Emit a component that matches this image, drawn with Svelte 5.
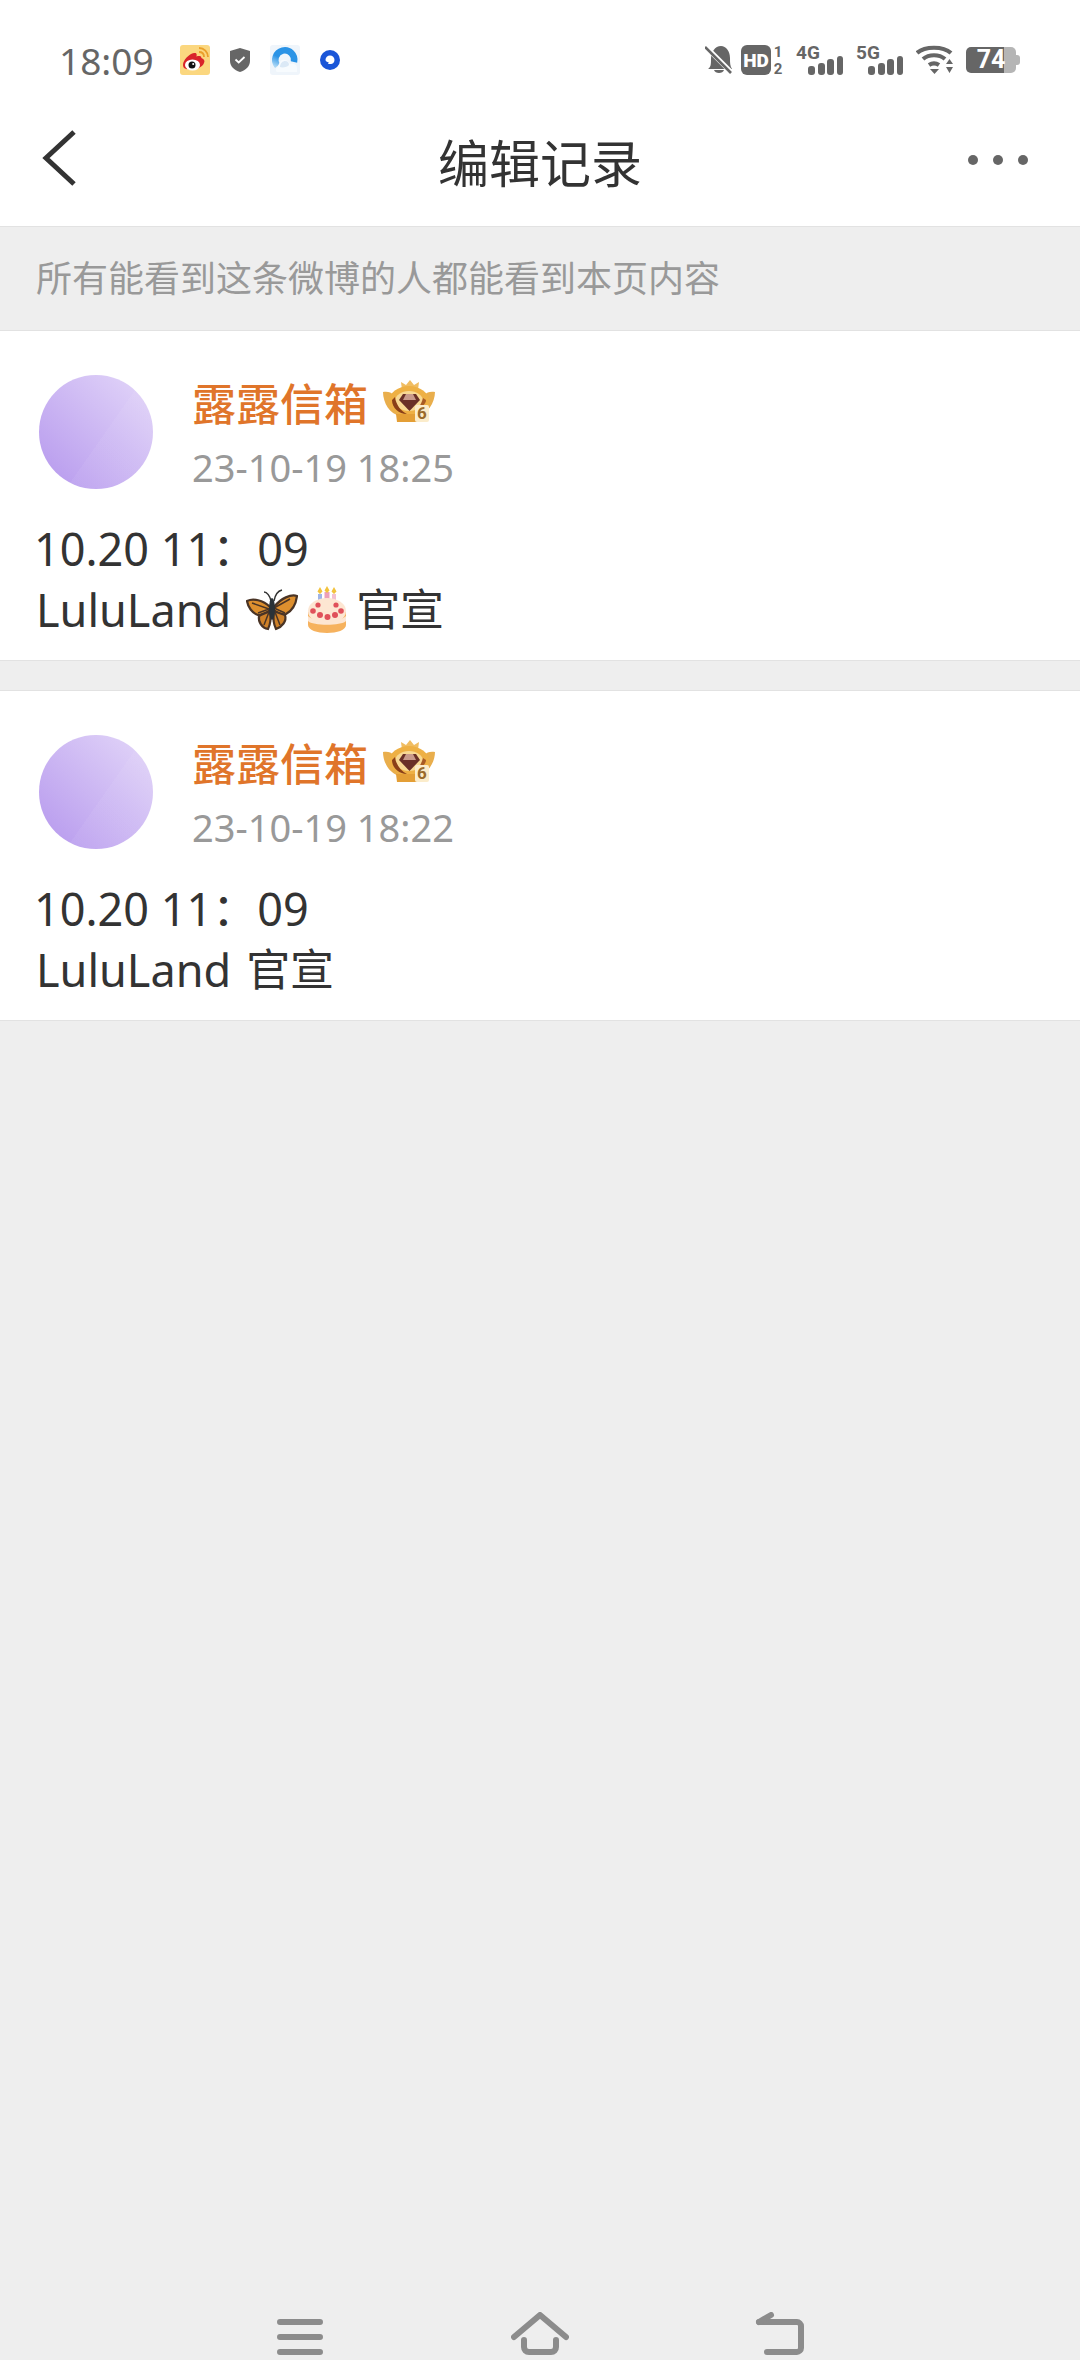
<script lang="ts">
  const records = [
    { time: '23-10-19 18:25', emoji: true },
    { time: '23-10-19 18:22', emoji: false }
  ];
</script>

<div class="page">
  <header class="status">
    <span class="clock">18:09</span>
    <div class="apps">
      <svg class="app" width="30" height="30" viewBox="0 0 30 30">
        <rect width="30" height="30" rx="3" fill="#fbd77f" />
        <path d="M3 20c0-5 6-11 11-12 3-.5 3 2 2.400 3.500 3-1 5-.5 5 1.500 3 1 3.600 3 2.600 5-1.500 4-7 6.500-12 6.500S3 24 3 20z" fill="#d9232a" />
        <ellipse cx="12.500" cy="20" rx="7.500" ry="5.500" fill="#fff" />
        <circle cx="12" cy="20" r="3.500" fill="#111" />
        <circle cx="13.200" cy="19" r="1" fill="#fff" />
        <path d="M19 7c3 0 5 2 5 5M19 3c5 0 9 4 9 9" fill="none" stroke="#eaa02a" stroke-width="1.800" />
      </svg>
      <svg class="app shield" width="20" height="24" viewBox="0 0 20 24">
        <path d="M10 0l10 3v10c0 5-4 9-10 11C4 22 0 18 0 13V3z" fill="#666" />
        <path d="M5.500 11.500l3.200 3 5.800-5.500" fill="none" stroke="#fff" stroke-width="1.800" />
      </svg>
      <svg class="app cloud" width="30" height="30" viewBox="0 0 30 30">
        <defs>
          <linearGradient id="arc" x1="0" y1="1" x2="0.600" y2="0">
            <stop offset="0" stop-color="#a9d6f5" />
            <stop offset="0.500" stop-color="#2a93e6" />
          </linearGradient>
        </defs>
        <rect width="30" height="30" rx="3" fill="#eff5fb" />
        <path d="M7.500 21A9.500 9.500 0 1 1 24 17" fill="none" stroke="url(#arc)" stroke-width="6.500" />
        <path d="M7 27c-2-1-1-5 1-5 1-4 3-8 7-7 3 0 4 3 5 4 4-1 7 1 7 4v4z" fill="#f7fbfe" />
        <path d="M10 22c0-4 3-6 5-6 3 0 4 2 4 4-1 2-7 3-9 2z" fill="#dbe9f6" />
      </svg>
      <svg class="app" width="20" height="20" viewBox="0 0 20 20">
        <circle cx="10" cy="10" r="10" fill="#1a56d8" />
        <path d="M10 5.500a4.500 4.500 0 0 1 4.500 4.500c0 2.500-2 4-3.500 4H8l.8-1.500C7 12 5.500 11 5.500 10A4.500 4.500 0 0 1 10 5.500z" fill="#fff" />
      </svg>
    </div>
    <div class="indicators">
      <svg class="bell" width="28" height="30" viewBox="0 0 28 30">
        <path d="M3 24c3-2 3-5 3-10C6 7 10 1 16 1c5 0 9 5 9 12 0 5 0 8 2 11z" fill="#666" />
        <path d="M9 25c1 4 9 4 10 0z" fill="#666" />
        <path d="M0 1l27 27" stroke="#fff" stroke-width="5" />
        <path d="M0 2l26 26" stroke="#666" stroke-width="2.600" />
      </svg>
      <svg class="hd" width="43" height="36" viewBox="0 0 43 36">
        <rect y="3" width="30" height="30" rx="6" fill="#666" />
        <text x="15" y="24.500" text-anchor="middle" class="hd-label">HD</text>
        <text x="37" y="15" text-anchor="middle" class="sim">1</text>
        <text x="37" y="32" text-anchor="middle" class="sim">2</text>
      </svg>
      <svg class="net" width="48" height="36" viewBox="0 0 48 36">
        <text x="0" y="17" class="gen">4G</text>
        <rect x="12" y="24" width="7" height="9" rx="3" fill="#666" />
        <rect x="22" y="21" width="7" height="12" rx="3" fill="#666" />
        <rect x="31" y="17" width="7" height="16" rx="3" fill="#666" />
        <rect x="41" y="14" width="6" height="19" rx="3" fill="#666" />
      </svg>
      <svg class="net" width="48" height="36" viewBox="0 0 48 36">
        <text x="0" y="17" class="gen">5G</text>
        <rect x="12" y="24" width="7" height="9" rx="3" fill="#666" />
        <rect x="22" y="21" width="7" height="12" rx="3" fill="#666" />
        <rect x="31" y="17" width="7" height="16" rx="3" fill="#666" />
        <rect x="41" y="14" width="6" height="19" rx="3" fill="#666" />
      </svg>
      <svg class="wifi" width="38" height="30" viewBox="0 0 38 30">
        <g fill="none" stroke="#666" stroke-width="4.200">
          <path d="M1 8c8-7 26-7 34 0" />
          <path d="M7 14c6-5 16-5 22 0" />
          <path d="M13 20c3-2 7-2 10 0" />
        </g>
        <path d="M14 24h9l-4.500 5z" fill="#666" />
        <path d="M30 19l3.500-5 3.500 5zM30 22h7l-3.500 6z" fill="#666" />
      </svg>
      <div class="battery">
        <span class="level">74</span>
        <span class="cap"></span>
      </div>
    </div>
  </header>

  <nav class="titlebar">
    <svg class="back" width="36" height="58" viewBox="0 0 36 58">
      <path d="M33 3L5 29l28 26" fill="none" stroke="#333" stroke-width="5" />
    </svg>
    <h1>编辑记录</h1>
    <div class="more"><i></i><i></i><i></i></div>
  </nav>

  <p class="notice">所有能看到这条微博的人都能看到本页内容</p>

  {#each records as record}
    <section class="card">
      <div class="author">
        <div class="avatar"></div>
        <div class="meta">
          <div class="name">
            露露信箱
            <svg class="crown" width="54" height="46" viewBox="0 0 54 46">
              <path d="M20 11l-1-8 5 3 4-5 4 5 5-3-1 8z" fill="#f0bd62" />
              <path d="M1 13c4-1 8 0 11 3l6 21C8 35 1 24 1 13zM53 13c-4-1-8 0-11 3l-6 21c9-2 17-13 17-24z" fill="#e9ae4c" />
              <ellipse cx="27" cy="22" rx="20" ry="15" fill="#eeb044" />
              <ellipse cx="27" cy="22" rx="14" ry="10" fill="#f8d893" />
              <path d="M13 18c1 8 6 14 12 17-8 0-15-6-15-14z" fill="#8a3f18" />
              <path d="M41 19c-1 4-3 8-6 11 5-2 9-5 9-9z" fill="#a85a24" />
              <path d="M21 15h13l4 6-10.500 11L17 21z" fill="#6a3028" />
              <path d="M24 15h7l3 6H21z" fill="#c99a8c" />
              <path d="M14 35h26l-1 8H15z" fill="#e49f36" />
              <rect x="33" y="26" width="14" height="17" rx="2" fill="#fbeccb" />
              <text x="40" y="40" text-anchor="middle" class="rank">6</text>
            </svg>
          </div>
          <time class="stamp">{record.time}</time>
        </div>
      </div>
      <div class="content">
        <div class="digits">10.20 11：09</div>
        <div class="line">
          <span class="label">LuluLand</span>
          {#if record.emoji}
            <svg class="butterfly" width="52" height="42" viewBox="0 0 52 42">
              <path d="M18 3c3 0 6 4 7 9M36 1c-4 1-7 5-8 11" fill="none" stroke="#333" stroke-width="1.500" />
              <path d="M24 18C17 11 7 9 1 12c1 6 5 12 11 14 4 0 9-2 12-5z" fill="#dd8f2e" stroke="#4a3426" stroke-width="2.200" />
              <path d="M28 18c7-9 17-13 23-11-1 8-5 15-11 18-4 1-9-1-12-4z" fill="#dd8f2e" stroke="#4a3426" stroke-width="2.200" />
              <path d="M24 22c-4 2-8 3-11 5-1 6 3 12 9 13 2-4 3-12 2-18z" fill="#cf8128" stroke="#4a3426" stroke-width="2.200" />
              <path d="M28 22c4 2 8 3 11 4 2 6-3 12-9 14-2-4-3-12-2-18z" fill="#cf8128" stroke="#4a3426" stroke-width="2.200" />
              <path d="M6 14l17 6M12 24l11-4M44 10l-16 9M39 24l-11-5M18 36l5-13M34 36l-5-13" stroke="#4a3426" stroke-width="1.500" />
              <ellipse cx="26" cy="20" rx="3" ry="11" fill="#2a3238" />
            </svg>
            <svg class="cake" width="40" height="48" viewBox="0 0 40 48">
              <rect x="11" y="8" width="4" height="14" fill="#9fb4e6" />
              <rect x="17.500" y="6" width="5" height="17" fill="#ee9fb8" />
              <rect x="25" y="8" width="4" height="14" fill="#f3c0d0" />
              <path d="M13 1l2.500 4.500L13 8l-2.500-2.500zM20 0l2.500 4.500L20 7l-2.500-2.500zM27 1l2.500 4.500L27 8l-2.500-2.500z" fill="#f2c23c" />
              <path d="M1 26v13c0 5 9 8 19 8s19-3 19-8V26z" fill="#f6b25e" />
              <ellipse cx="20" cy="25" rx="19" ry="13" fill="#fde6d2" />
              <path d="M1 30v5c5 5 33 5 38 0v-5c-5 6-33 6-38 0z" fill="#fde6d2" />
              <g fill="#e0505a">
                <circle cx="6" cy="25" r="2.800" /><circle cx="11" cy="19" r="2.600" /><circle cx="29" cy="19" r="2.600" /><circle cx="34" cy="25" r="2.800" />
                <circle cx="13" cy="29" r="3" /><circle cx="20.500" cy="31" r="3" /><circle cx="28" cy="29" r="3" />
              </g>
            </svg>
          {/if}
          <span class="cjk">官宣</span>
        </div>
      </div>
    </section>
  {/each}

  <footer class="softkeys">
    <svg width="46" height="36" viewBox="0 0 46 36">
      <path d="M3 3h40M3 18h40M3 33h40" stroke="#8c8c8c" stroke-width="6" stroke-linecap="round" />
    </svg>
    <svg width="58" height="43" viewBox="0 0 58 43">
      <path d="M3 25L29 3l26 22" fill="none" stroke="#8c8c8c" stroke-width="6" stroke-linecap="round" stroke-linejoin="round" />
      <path d="M13 28v7c0 3 2 5 5 5h22c3 0 5-2 5-5v-7" fill="none" stroke="#8c8c8c" stroke-width="6" stroke-linecap="round" />
    </svg>
    <svg width="50" height="43" viewBox="0 0 50 43">
      <path d="M4 10h38c2 0 4 2 4 4v22c0 2-2 4-4 4H12" fill="none" stroke="#8c8c8c" stroke-width="6" stroke-linecap="round" />
      <path d="M4 10l12-7" fill="none" stroke="#8c8c8c" stroke-width="6" stroke-linecap="round" />
    </svg>
  </footer>
</div>

<style>
  :global(body) { margin: 0; background: #eeeeee; }
  .page {
    display: flex;
    flex-direction: column;
    height: 2360px;
    overflow: hidden;
    background: #eeeeee;
    color: #333;
    font-family: "Noto Sans", "Noto Sans CJK SC", sans-serif;
  }
  .status {
    display: flex;
    align-items: center;
    height: 100px;
    padding: 20px 60px 0 59px;
    box-sizing: border-box;
    background: #fff;
    color: #666;
  }
  .clock { font-size: 37px; width: 121px; }
  .apps { display: flex; align-items: center; gap: 20px; }
  .indicators { display: flex; align-items: center; gap: 8px; margin-left: auto; }
  .hd-label { font: 900 19px Roboto, sans-serif; fill: #fff; }
  .sim { font: 700 15px Roboto, sans-serif; fill: #666; }
  .gen { font: 700 19px Roboto, sans-serif; fill: #666; }
  .net { margin-left: 4px; }
  .wifi { margin: 0 4px; }
  .battery { display: flex; align-items: center; width: 54px; height: 26px; }
  .level {
    width: 50px;
    height: 26px;
    border-radius: 5px;
    background: linear-gradient(90deg, #666 76%, #b5b5b5 76%);
    color: #fff;
    font: 700 25px/26px Roboto, sans-serif;
    text-align: center;
  }
  .cap { width: 4px; height: 10px; border-radius: 0 3px 3px 0; background: #b5b5b5; }
  .titlebar {
    display: grid;
    grid-template-columns: 1fr auto 1fr;
    align-items: center;
    height: 127px;
    padding: 0 41px 6px;
    box-sizing: border-box;
    background: #fff;
    border-bottom: 1px solid #e2e2e2;
  }
  .back { margin-bottom: 4px; }
  .titlebar h1 {
    margin: 1px 0 0;
    font-size: 51px;
    font-weight: 400;
    color: #333;
  }
  .more { display: flex; gap: 15px; justify-content: flex-end; margin-right: 11px; }
  .more i { width: 10px; height: 10px; border-radius: 50%; background: #666; }
  .notice {
    margin: 0;
    padding: 0 36px;
    height: 103px;
    line-height: 104px;
    font-size: 36px;
    color: #999;
  }
  .card {
    box-sizing: border-box;
    height: 331px;
    margin-bottom: 29px;
    padding: 44px 36px 0;
    background: #fff;
    border-top: 1px solid #e2e2e2;
    border-bottom: 1px solid #e2e2e2;
  }
  .author { display: flex; gap: 39px; padding-left: 3px; }
  .avatar {
    width: 114px;
    height: 114px;
    border-radius: 50%;
    background:
      linear-gradient(125deg, rgba(255, 255, 255, 0) 55%, rgba(255, 255, 255, 0.05) 55%),
      linear-gradient(45deg, #b597ed, #e4d8f9);
  }
  .meta { display: flex; flex-direction: column; margin-top: -3px; }
  .name {
    display: flex;
    align-items: center;
    gap: 14px;
    height: 60px;
    font-size: 44px;
    font-weight: 500;
    color: #e0752a;
  }
  .rank { font: 700 17px Roboto, sans-serif; fill: #9a6a2a; }
  .stamp { font-size: 38px; line-height: 40px; color: #999; margin-top: 15px; }
  .content {
    margin-top: 29px;
    font-size: 45px;
    line-height: 61px;
  }
  .digits { margin-left: -2px; }
  .line { display: flex; align-items: center; gap: 9px; }
  .label { margin-right: 6px; }
  .cjk { font-size: 44px; }
  .softkeys {
    display: grid;
    grid-template-columns: repeat(3, 240px);
    justify-content: center;
    justify-items: center;
    align-items: end;
    margin-top: auto;
    padding-bottom: 5px;
  }
</style>
